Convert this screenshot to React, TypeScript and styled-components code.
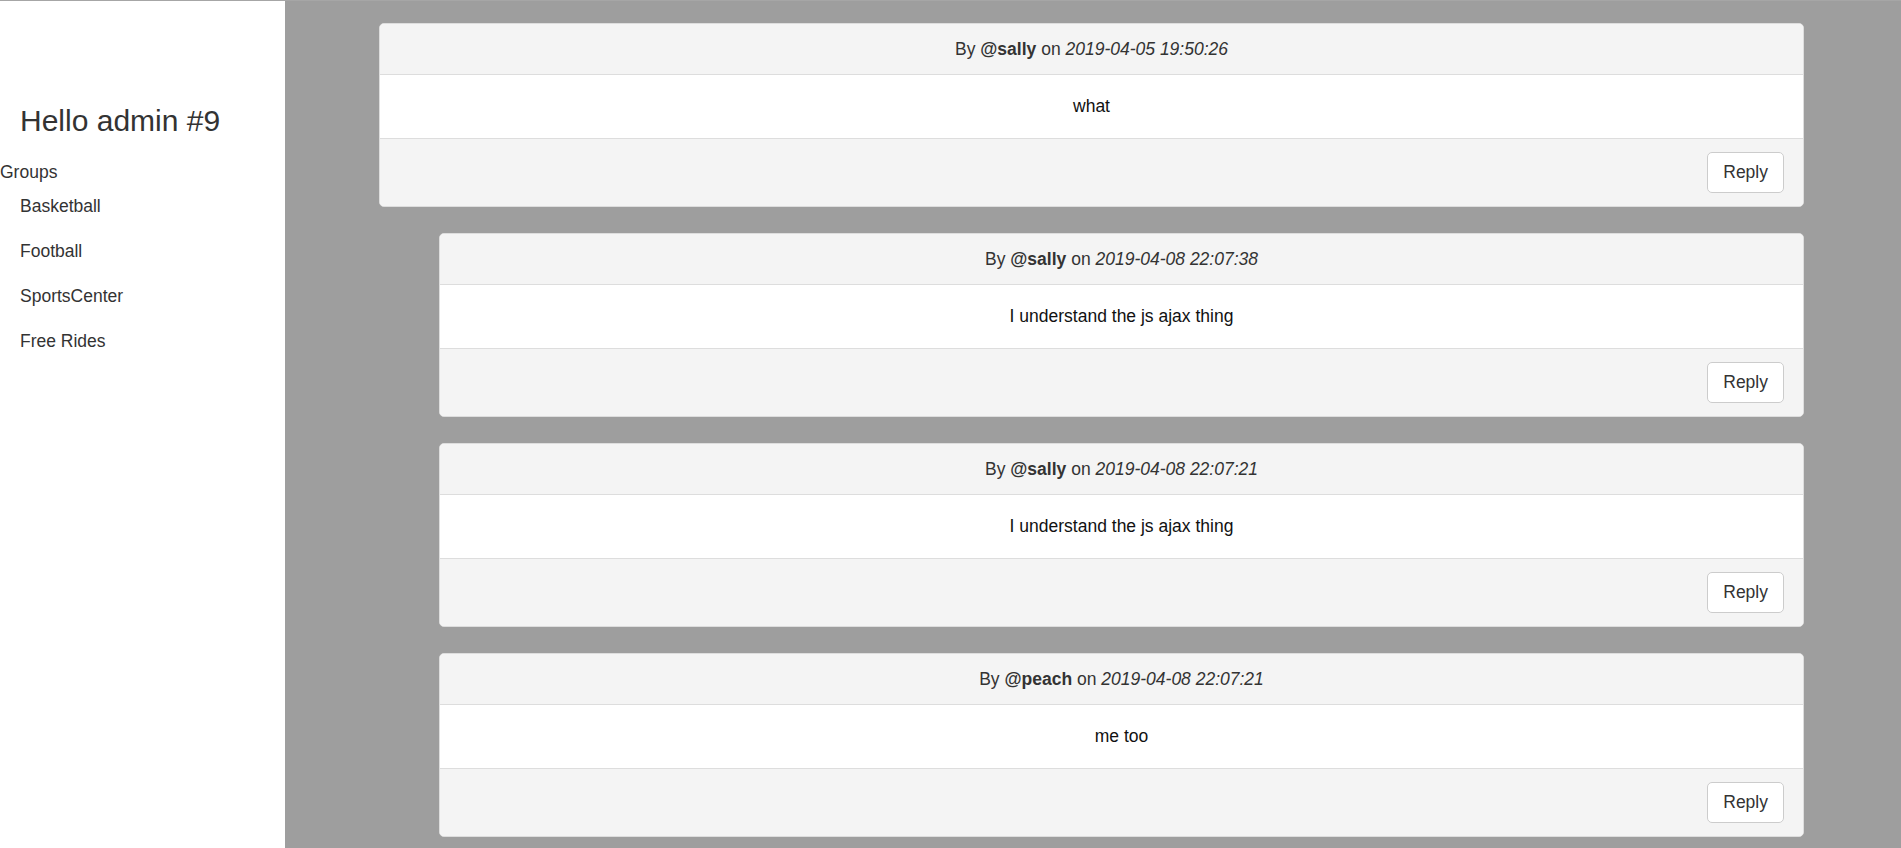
import React from 'react'
import styled, { createGlobalStyle } from 'styled-components'

interface Post {
  id: number
  author: string
  date: string
  text: string
  isReply?: boolean
}

const groups = ['Basketball', 'Football', 'SportsCenter', 'Free Rides']

const posts: Post[] = [
  { id: 1, author: 'sally', date: '2019-04-05 19:50:26', text: 'what' },
  {
    id: 2,
    author: 'sally',
    date: '2019-04-08 22:07:38',
    text: 'I understand the js ajax thing',
    isReply: true,
  },
  {
    id: 3,
    author: 'sally',
    date: '2019-04-08 22:07:21',
    text: 'I understand the js ajax thing',
    isReply: true,
  },
  { id: 4, author: 'peach', date: '2019-04-08 22:07:21', text: 'me too', isReply: true },
]

const GlobalStyle = createGlobalStyle`
  html, body {
    margin: 0;
    padding: 0;
  }

  body {
    border-top: 1px solid #a6a6a6;
    font-family: "Liberation Sans", Arial, sans-serif;
    font-size: 17.5px;
    line-height: 25px;
    color: #333;
    background: #fff;
  }

  * {
    box-sizing: border-box;
  }
`

const App: React.FC = () => {
  return (
    <>
      <GlobalStyle />
      <Layout>
        <Sidebar>
          <Greeting>Hello admin #9</Greeting>
          <GroupsLabel>Groups</GroupsLabel>
          <GroupList>
            {groups.map((name) => (
              <GroupItem key={name}>{name}</GroupItem>
            ))}
          </GroupList>
        </Sidebar>
        <Main>
          {posts.map((post) => (
            <Panel key={post.id} $reply={post.isReply}>
              <PanelHeading>
                By <strong>@{post.author}</strong> on <em>{post.date}</em>
              </PanelHeading>
              <PanelBody>{post.text}</PanelBody>
              <PanelFooter>
                <ReplyButton type="button">Reply</ReplyButton>
              </PanelFooter>
            </Panel>
          ))}
        </Main>
      </Layout>
    </>
  )
}

const Layout = styled.div`
  display: flex;
  min-height: calc(100vh - 1px);
`

const Sidebar = styled.aside`
  width: 285px;
  flex-shrink: 0;
  background: #fff;
  padding-top: 103px;
`

const Greeting = styled.h3`
  margin: 0 0 23px 20px;
  font-size: 30px;
  font-weight: 400;
  line-height: 33px;
  color: #333;
`

const GroupsLabel = styled.div`
  padding-left: 0;
  color: #333;
`

const GroupList = styled.ul`
  list-style: none;
  margin: -1px 0 0;
  padding: 0;
`

const GroupItem = styled.li`
  padding: 10px 20px;
  color: #333;
  cursor: pointer;
`

const Main = styled.main`
  flex: 1;
  background: #9e9e9e;
  padding: 22px 97px 0 94px;
  display: flex;
  flex-direction: column;
  gap: 26px;
`

const Panel = styled.section<{ $reply?: boolean }>`
  margin-left: ${({ $reply }) => ($reply ? '60px' : '0')};
  background: #fff;
  border: 1px solid #ddd;
  border-radius: 5px;
  overflow: hidden;
`

const PanelHeading = styled.div`
  padding: 12.5px 15px;
  background: #f4f4f4;
  border-bottom: 1px solid #ddd;
  text-align: center;
  color: #333;

  strong {
    font-weight: 700;
  }
`

const PanelBody = styled.div`
  padding: 19px;
  text-align: center;
  color: #111;
  border-bottom: 1px solid #ddd;
`

const PanelFooter = styled.div`
  display: flex;
  justify-content: flex-end;
  padding: 13px 19px;
  background: #f4f4f4;
`

const ReplyButton = styled.button`
  height: 41px;
  padding: 0 15px;
  font-family: inherit;
  font-size: 17.5px;
  color: #333;
  background: #fff;
  border: 1px solid #ccc;
  border-radius: 5px;
  cursor: pointer;
`

export default App
